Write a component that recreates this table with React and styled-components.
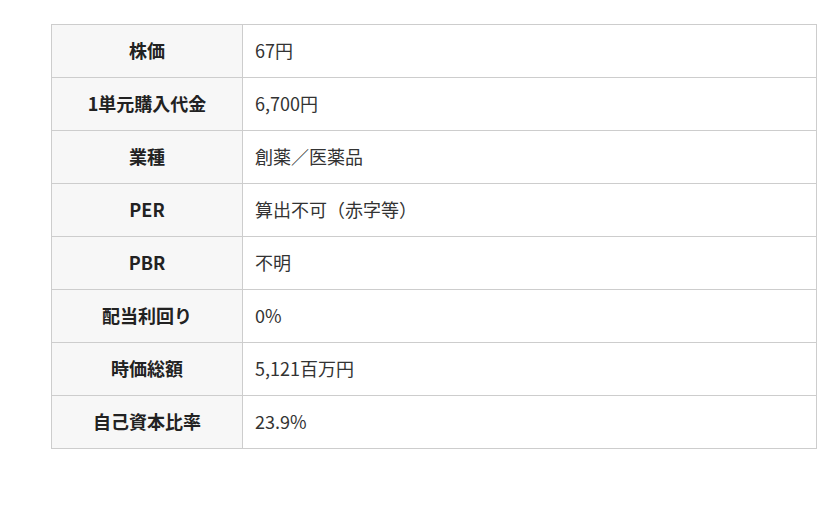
import React from "react";
import styled, { createGlobalStyle } from "styled-components";

const GlobalStyle = createGlobalStyle`
  html, body {
    margin: 0;
    padding: 0;
    background: #fff;
    font-family: "Noto Sans CJK JP", "Noto Sans", sans-serif;
    color: #333;
  }
`;

const Page = styled.div`
  padding: 24px 0 0 51px;
`;

const Table = styled.table`
  width: 766px;
  border-collapse: collapse;
  table-layout: fixed;
  font-size: 18px;
  line-height: 1.5;
`;

const Row = styled.tr`
  height: 53px;
`;

const Head = styled.th`
  box-sizing: border-box;
  width: 191px;
  background: #f7f7f7;
  border: 1px solid #cdcdcd;
  font-weight: 700;
  text-align: center;
  color: #222;
  padding: 0 8px 2px;
`;

const Cell = styled.td`
  border: 1px solid #cdcdcd;
  padding: 0 12px 2px;
  color: #333;
`;

const rows = [
  ["株価", "67円"],
  ["1単元購入代金", "6,700円"],
  ["業種", "創薬／医薬品"],
  ["PER", "算出不可（赤字等）"],
  ["PBR", "不明"],
  ["配当利回り", "0%"],
  ["時価総額", "5,121百万円"],
  ["自己資本比率", "23.9%"],
];

const App = () => {
  return (
    <Page>
      <GlobalStyle />
      <Table>
        <tbody>
          {rows.map(([label, value]) => (
            <Row key={label}>
              <Head>{label}</Head>
              <Cell>{value}</Cell>
            </Row>
          ))}
        </tbody>
      </Table>
    </Page>
  );
};

export default App;
